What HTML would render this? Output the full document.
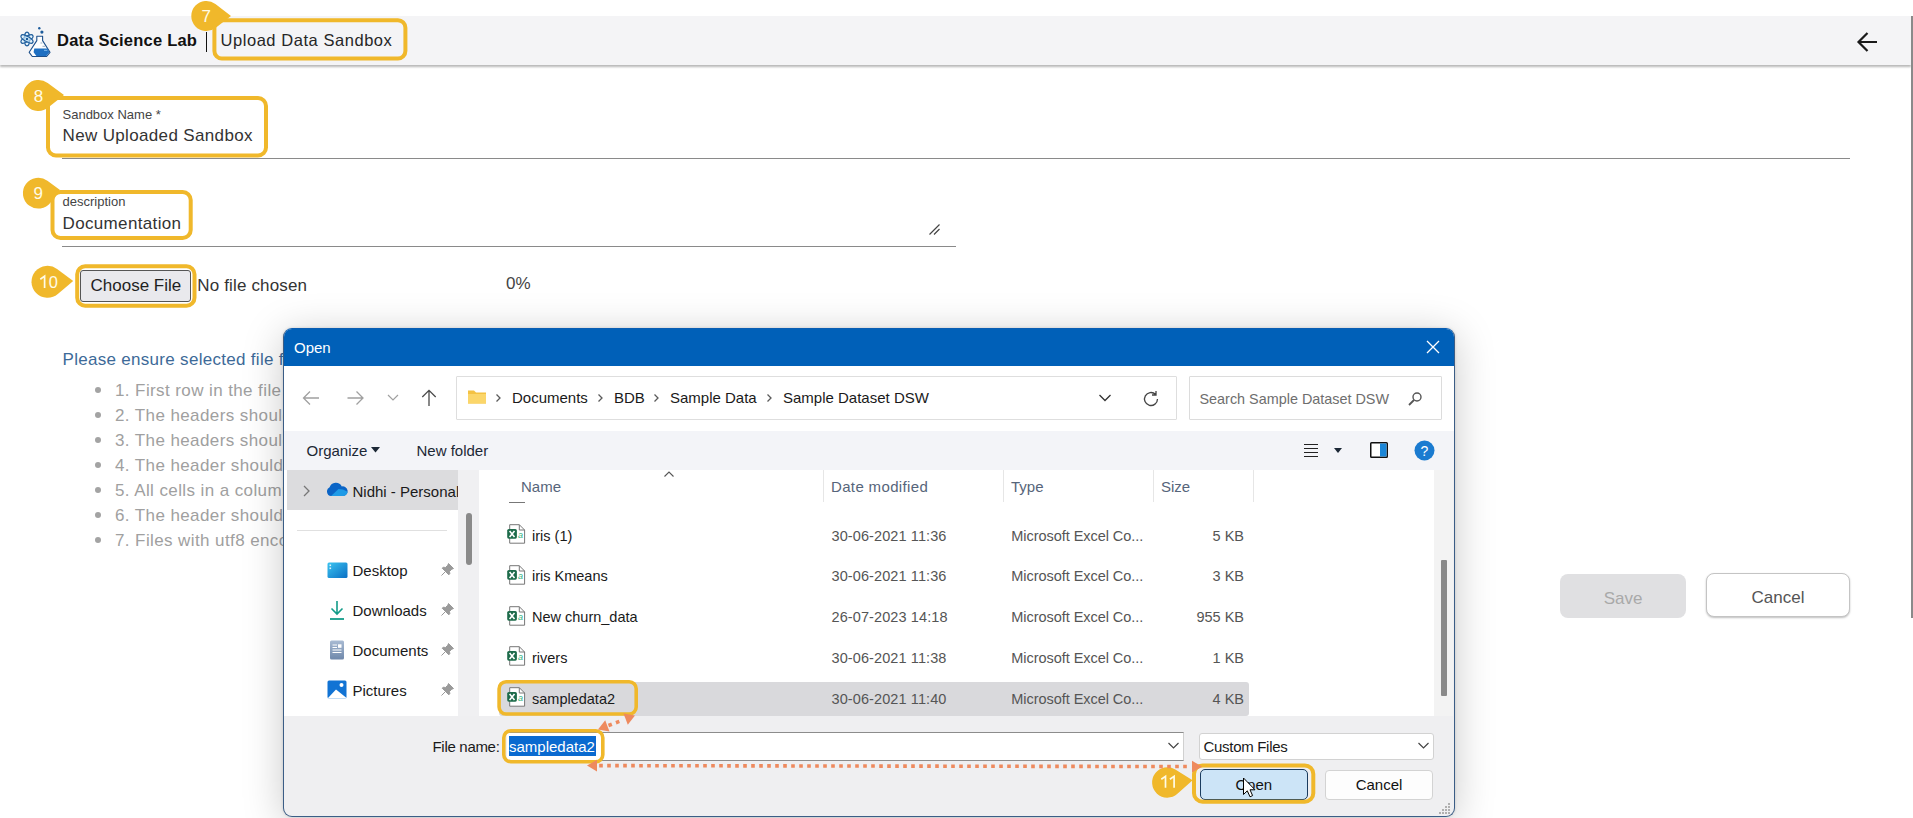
<!DOCTYPE html>
<html><head><meta charset="utf-8">
<style>
*{box-sizing:border-box;margin:0;padding:0}
html,body{width:1913px;height:818px;overflow:hidden;background:#fff}
body{position:relative;font-family:"Liberation Sans",sans-serif}
.a{position:absolute}
.t{position:absolute;white-space:nowrap;line-height:1}
</style></head><body>
<!-- header -->
<div class="a" style="left:0;top:16px;width:1911px;height:49px;background:#f4f4f6;box-shadow:0 1.5px 2px rgba(0,0,0,.28)"></div>
<div class="a" style="left:1911px;top:16px;width:2px;height:602px;background:#8a8a8a"></div>
<!-- logo -->
<svg class="a" style="left:0;top:0" width="60" height="64" viewBox="0 0 60 64">
 <g fill="#d9f1ff" fill-opacity=".6" stroke="#1d5c9c" stroke-width="1.2">
  <ellipse cx="27" cy="39" rx="2.6" ry="6.8"/>
  <ellipse cx="27" cy="39" rx="2.6" ry="6.8" transform="rotate(60 27 39)"/>
  <ellipse cx="27" cy="39" rx="2.6" ry="6.8" transform="rotate(-60 27 39)"/>
 </g>
 <circle cx="27" cy="39" r="1.3" fill="#1d5c9c"/>
 <circle cx="39.3" cy="28.2" r="1.2" fill="#1d5c9c"/><circle cx="41.9" cy="32.1" r="1.6" fill="#1d5c9c"/>
 <path d="M36.8 36.3 H42.6 V40.6 L50 52.3 L46.6 56.5 H32.3 L29.2 52.3 L36.8 40.6 Z" fill="#fff" fill-opacity=".85" stroke="#1d4f8a" stroke-width="1.1" stroke-linejoin="round"/>
 <path d="M34.3 48.4 H47.5 L49.4 52.3 L46.3 56.1 H36.4 L33.6 52.3 Z" fill="#1e6fc2"/>
 <path d="M44 50.3 H47.3" stroke="#8fc6f2" stroke-width="0.9"/>
 <path d="M40.5 43 H42.3 M42.5 46.3 H45" stroke="#6f8aa8" stroke-width="0.7"/>
</svg>
<div class="t" style="left:57px;top:31.5px;font-size:16.5px;font-weight:bold;color:#111;letter-spacing:0.22px">Data Science Lab</div>
<div class="a" style="left:205.5px;top:32px;width:1.2px;height:19.5px;background:#111"></div>
<div class="t" style="left:220.5px;top:31.5px;font-size:16.5px;color:#262626;letter-spacing:0.55px">Upload Data Sandbox</div>
<!-- back arrow -->
<svg class="a" style="left:1855px;top:31px" width="24" height="22" viewBox="0 0 24 22"><path d="M22 11 H3.5 M12.5 2 L3.5 11 L12.5 20" fill="none" stroke="#1a1a1a" stroke-width="2.2"/></svg>

<!-- form -->
<div class="t" style="left:62.5px;top:107.8px;font-size:13px;color:#444">Sandbox Name *</div>
<div class="t" style="left:62.5px;top:126.6px;font-size:17px;color:#333;letter-spacing:0.35px">New Uploaded Sandbox</div>
<div class="a" style="left:62px;top:158px;width:1788px;height:1px;background:#8a8a8a"></div>
<div class="t" style="left:62.5px;top:195px;font-size:13px;color:#444">description</div>
<div class="t" style="left:62.5px;top:214.6px;font-size:17px;color:#333;letter-spacing:0.35px">Documentation</div>
<svg class="a" style="left:928px;top:223px" width="13" height="13"><path d="M1.5 11.5 L11.5 1.5 M6 11.5 L11.5 6" stroke="#444" stroke-width="1.2"/></svg>
<div class="a" style="left:62px;top:246px;width:894px;height:1px;background:#8a8a8a"></div>
<div class="a" style="left:80px;top:270px;width:111px;height:32px;background:#e9e9ed;border:1px solid #555;border-radius:3px"></div>
<div class="t" style="left:90.5px;top:277.1px;font-size:17px;color:#1f1f1f">Choose File</div>
<div class="t" style="left:197.3px;top:277.1px;font-size:17px;color:#333;letter-spacing:0.15px">No file chosen</div>
<div class="t" style="left:506px;top:274.5px;font-size:17px;color:#444">0%</div>
<div class="t" style="left:62.5px;top:350.6px;font-size:17px;color:#3d6a98;letter-spacing:0.3px">Please ensure selected file format</div>
<div class="a" style="left:115px;top:377.6px;font-size:17px;color:#a0a0a0;line-height:25px;letter-spacing:0.4px;white-space:nowrap">
 <div>1. First row in the file</div><div>2. The headers should</div><div>3. The headers should</div><div>4. The header should</div><div>5. All cells in a column</div><div>6. The header should</div><div>7. Files with utf8 encoding</div>
</div>
<div class="a" style="left:95px;top:387px">
 <div class="a" style="top:0;width:6px;height:6px;border-radius:50%;background:#a3a3a3"></div>
 <div class="a" style="top:25px;width:6px;height:6px;border-radius:50%;background:#a3a3a3"></div>
 <div class="a" style="top:50px;width:6px;height:6px;border-radius:50%;background:#a3a3a3"></div>
 <div class="a" style="top:75px;width:6px;height:6px;border-radius:50%;background:#a3a3a3"></div>
 <div class="a" style="top:100px;width:6px;height:6px;border-radius:50%;background:#a3a3a3"></div>
 <div class="a" style="top:125px;width:6px;height:6px;border-radius:50%;background:#a3a3a3"></div>
 <div class="a" style="top:150px;width:6px;height:6px;border-radius:50%;background:#a3a3a3"></div>
</div>
<div class="a" style="left:1560px;top:574px;width:126px;height:44px;background:#e0e0e2;border-radius:8px"></div>
<div class="t" style="left:1560px;width:126px;text-align:center;top:590.2px;font-size:17px;color:#a9a9a9">Save</div>
<div class="a" style="left:1706px;top:573px;width:144px;height:44px;background:#fff;border:1px solid #c4c4c4;border-radius:8px;box-shadow:0 1px 2px rgba(0,0,0,.25)"></div>
<div class="t" style="left:1706px;width:144px;text-align:center;top:589.2px;font-size:17px;color:#555">Cancel</div>


<div class="a" style="left:283px;top:328px;width:1172px;height:489px;border-radius:9px;box-shadow:0 6px 40px rgba(0,0,0,.21),0 0 3px rgba(0,0,0,.15);background:#efeff1;border:1px solid #3b5d86;border-top-color:#0a5db2;overflow:hidden">
 <div class="a" style="left:0;top:0;width:1172px;height:38px;background:#0060b8"></div>
</div>
<div class="t" style="left:294px;top:340.3px;font-size:15px;color:#fff">Open</div>
<svg class="a" style="left:1426px;top:340px" width="14" height="14"><path d="M1 1 L13 13 M13 1 L1 13" stroke="#fff" stroke-width="1.3"/></svg>
<!-- toolbar area white -->
<div class="a" style="left:284px;top:366px;width:1170px;height:64.5px;background:#fff"></div>
<svg class="a" style="left:300px;top:388px" width="22" height="20"><path d="M19 10 H3.5 M10 3.5 L3.5 10 L10 16.5" fill="none" stroke="#a0a0a0" stroke-width="1.3"/></svg>
<svg class="a" style="left:345px;top:388px" width="22" height="20"><path d="M2.5 10 H18 M11.5 3.5 L18 10 L11.5 16.5" fill="none" stroke="#a0a0a0" stroke-width="1.3"/></svg>
<svg class="a" style="left:386px;top:393px" width="14" height="10"><path d="M2 2 L7 7 L12 2" fill="none" stroke="#a0a0a0" stroke-width="1.2"/></svg>
<svg class="a" style="left:419px;top:387px" width="20" height="22"><path d="M10 19 V3.5 M3.3 10 L10 3.3 L16.7 10" fill="none" stroke="#4a4a4a" stroke-width="1.3"/></svg>
<div class="a" style="left:456px;top:376px;width:721px;height:44px;background:#fff;border:1px solid #dedede;border-radius:1px"></div>
<svg class="a" style="left:467px;top:389px" width="20" height="16"><path d="M1 1.5 h6 l2 2 h10 v11 h-18z" fill="#f4c243"/><path d="M1 5 h18 v9.5 h-18z" fill="#fbd66a"/></svg>
<svg class="a" style="left:494px;top:392px" width="8" height="12"><path d="M2.5 2.5 L6 6 L2.5 9.5" fill="none" stroke="#5a5a5a" stroke-width="1.3"/></svg>
<div class="t" style="left:512px;top:390.3px;font-size:15px;color:#1a1a1a">Documents</div>
<svg class="a" style="left:596px;top:392px" width="8" height="12"><path d="M2.5 2.5 L6 6 L2.5 9.5" fill="none" stroke="#5a5a5a" stroke-width="1.3"/></svg>
<div class="t" style="left:614px;top:390.3px;font-size:15px;color:#1a1a1a">BDB</div>
<svg class="a" style="left:652px;top:392px" width="8" height="12"><path d="M2.5 2.5 L6 6 L2.5 9.5" fill="none" stroke="#5a5a5a" stroke-width="1.3"/></svg>
<div class="t" style="left:670px;top:390.3px;font-size:15px;color:#1a1a1a">Sample Data</div>
<svg class="a" style="left:765px;top:392px" width="8" height="12"><path d="M2.5 2.5 L6 6 L2.5 9.5" fill="none" stroke="#5a5a5a" stroke-width="1.3"/></svg>
<div class="t" style="left:783px;top:390.3px;font-size:15px;color:#1a1a1a">Sample Dataset DSW</div>
<svg class="a" style="left:1098px;top:393px" width="14" height="10"><path d="M1.5 2 L7 7.5 L12.5 2" fill="none" stroke="#333" stroke-width="1.3"/></svg>
<svg class="a" style="left:1142px;top:390px" width="19" height="18"><path d="M15.5 9 A6.5 6.5 0 1 1 13.5 4.3 M14 1 V5 H10" fill="none" stroke="#444" stroke-width="1.3"/></svg>
<div class="a" style="left:1189px;top:376px;width:253px;height:44px;background:#fff;border:1px solid #dcdcdc;border-radius:1px"></div>
<div class="t" style="left:1199.5px;top:392.3px;font-size:14.4px;color:#6e6e6e">Search Sample Dataset DSW</div>
<svg class="a" style="left:1407px;top:391px" width="16" height="16"><circle cx="10" cy="6" r="4" fill="none" stroke="#555" stroke-width="1.4"/><path d="M7 9 L2 14" stroke="#555" stroke-width="1.8"/></svg>
<!-- command bar -->
<div class="a" style="left:284px;top:430.5px;width:1170px;height:39.5px;background:#f3f4f8"></div>
<div class="t" style="left:306.5px;top:443.3px;font-size:15px;color:#1c2836">Organize</div>
<svg class="a" style="left:371px;top:447px" width="9" height="6"><path d="M0 0 H9 L4.5 5.5z" fill="#1c2836"/></svg>
<div class="t" style="left:416.5px;top:443.3px;font-size:15px;color:#1c2836">New folder</div>
<svg class="a" style="left:1303px;top:443px" width="16" height="16"><path d="M1 1.5 H15 M1 5.5 H15 M1 9.5 H15 M1 13.5 H15" stroke="#222" stroke-width="1.2"/></svg>
<svg class="a" style="left:1333.5px;top:448px" width="9" height="6"><path d="M0 0 H8 L4 5z" fill="#1c2836"/></svg>
<svg class="a" style="left:1370px;top:442px" width="20" height="18"><rect x="0.75" y="0.75" width="16.5" height="14.5" rx="0.8" fill="#fff" stroke="#111" stroke-width="1.5"/><rect x="10" y="1.5" width="6.5" height="13" fill="#1a86d8"/></svg>
<svg class="a" style="left:1414px;top:440px" width="21" height="21"><circle cx="10.5" cy="10.5" r="10" fill="#1a7bd0"/><text x="10.5" y="15.5" font-family="Liberation Sans" font-size="14" fill="#fff" text-anchor="middle">?</text></svg>
<!-- nav pane -->
<div class="a" style="left:284px;top:470px;width:174px;height:246px;background:#fff"></div>
<div class="a" style="left:458px;top:470px;width:21px;height:246px;background:#f0f0f2"></div>
<div class="a" style="left:466px;top:513px;width:6px;height:52px;background:#8a8a8a;border-radius:3px"></div>
<div class="a" style="left:287px;top:470px;width:171px;height:40px;background:#dcdcde"></div>
<svg class="a" style="left:301px;top:484px" width="10" height="14"><path d="M3 2 L8 7 L3 12" fill="none" stroke="#777" stroke-width="1.3"/></svg>
<svg class="a" style="left:326px;top:482px" width="22" height="15" viewBox="0 0 22 15"><defs><clipPath id="cc"><path d="M5 14 A4.6 4.6 0 0 1 3.6 5.3 A6.6 6.6 0 0 1 15.8 4.4 A4.6 4.6 0 0 1 17.6 14z"/></clipPath></defs><g clip-path="url(#cc)"><rect x="0" y="0" width="22" height="15" fill="#0a64c6"/><path d="M4 15 L12.5 7 L17 7.5 L22 10 V15z" fill="#1e9ae6"/></g></svg>
<div class="t" style="left:352.5px;top:483.6px;width:105px;overflow:hidden;font-size:15px;color:#1a1a1a">Nidhi - Personal</div>
<div class="a" style="left:297px;top:530px;width:150px;height:1px;background:#e0e0e0"></div>

<!-- quick access -->
<svg class="a" style="left:327px;top:562px" width="21" height="17"><defs><linearGradient id="dg" x1="0" y1="0" x2="1" y2="1"><stop offset="0" stop-color="#3cc4f0"/><stop offset="1" stop-color="#0a6fc4"/></linearGradient></defs><rect x="0.5" y="0.5" width="20" height="15.5" rx="1.5" fill="url(#dg)"/><rect x="2.5" y="2.5" width="1.6" height="1.6" fill="#fff" fill-opacity=".85"/><rect x="2.5" y="5.5" width="1.6" height="1.6" fill="#fff" fill-opacity=".85"/></svg>
<div class="t" style="left:352.5px;top:563.3px;font-size:15px;color:#1a1a1a">Desktop</div>
<svg class="a" style="left:329px;top:600px" width="16" height="21"><path d="M8 1 V14 M2.5 8.5 L8 14 L13.5 8.5" fill="none" stroke="#139c89" stroke-width="1.6"/><path d="M1 19 H15" stroke="#139c89" stroke-width="1.8"/></svg>
<div class="t" style="left:352.5px;top:603.3px;font-size:15px;color:#1a1a1a">Downloads</div>
<svg class="a" style="left:329px;top:640px" width="16" height="20"><defs><linearGradient id="docg" x1="0" y1="0" x2="0" y2="1"><stop offset="0" stop-color="#a9bbd3"/><stop offset="1" stop-color="#6f88ab"/></linearGradient></defs><rect x="1" y="0.5" width="14" height="19" rx="1.5" fill="url(#docg)"/><path d="M3.5 5 H8 M3.5 7.5 H8 M3.5 10 H12.5 M3.5 12.5 H12.5" stroke="#fff" stroke-width="1"/><rect x="9" y="4.3" width="3.5" height="3.5" fill="#fff"/></svg>
<div class="t" style="left:352.5px;top:643.3px;font-size:15px;color:#1a1a1a">Documents</div>
<svg class="a" style="left:327px;top:680px" width="20" height="19"><rect x="0.5" y="0.5" width="19" height="18" rx="1.5" fill="#1173d4"/><path d="M1 18 L9 9.5 L19 17.5 V18.5 H1z" fill="#fff"/><circle cx="14.5" cy="5" r="2" fill="#fff"/></svg>
<div class="t" style="left:352.5px;top:683.3px;font-size:15px;color:#1a1a1a">Pictures</div>
<svg class="a" style="left:440px;top:562px" width="15" height="15"><path d="M8.5 1.5 L13.5 6.5 L11.8 7.2 L9.5 9.5 L9.8 11.8 L8.8 12.8 L2.2 6.2 L3.2 5.2 L5.5 5.5 L7.8 3.2z M5.5 9.5 L1.5 13.5" fill="#9a9a9a" stroke="#9a9a9a" stroke-width="1" stroke-linejoin="round"/></svg>
<svg class="a" style="left:440px;top:602px" width="15" height="15"><path d="M8.5 1.5 L13.5 6.5 L11.8 7.2 L9.5 9.5 L9.8 11.8 L8.8 12.8 L2.2 6.2 L3.2 5.2 L5.5 5.5 L7.8 3.2z M5.5 9.5 L1.5 13.5" fill="#9a9a9a" stroke="#9a9a9a" stroke-width="1" stroke-linejoin="round"/></svg>
<svg class="a" style="left:440px;top:642px" width="15" height="15"><path d="M8.5 1.5 L13.5 6.5 L11.8 7.2 L9.5 9.5 L9.8 11.8 L8.8 12.8 L2.2 6.2 L3.2 5.2 L5.5 5.5 L7.8 3.2z M5.5 9.5 L1.5 13.5" fill="#9a9a9a" stroke="#9a9a9a" stroke-width="1" stroke-linejoin="round"/></svg>
<svg class="a" style="left:440px;top:682px" width="15" height="15"><path d="M8.5 1.5 L13.5 6.5 L11.8 7.2 L9.5 9.5 L9.8 11.8 L8.8 12.8 L2.2 6.2 L3.2 5.2 L5.5 5.5 L7.8 3.2z M5.5 9.5 L1.5 13.5" fill="#9a9a9a" stroke="#9a9a9a" stroke-width="1" stroke-linejoin="round"/></svg>

<!-- file list -->
<div class="a" style="left:479px;top:470px;width:955px;height:246px;background:#fff"></div>
<div class="a" style="left:1434px;top:470px;width:19px;height:246px;background:#f3f3f3"></div>
<div class="a" style="left:1441px;top:560px;width:6px;height:136px;background:#8a8a8a;border-radius:1px"></div>
<svg class="a" style="left:663px;top:470px" width="12" height="8"><path d="M1.5 6.5 L6 2 L10.5 6.5" fill="none" stroke="#555" stroke-width="1.1"/></svg>
<div class="t" style="left:521px;top:478.8px;font-size:15px;color:#56657a">Name</div>
<div class="a" style="left:509px;top:502px;width:16px;height:1px;background:#777"></div>
<div class="a" style="left:823px;top:470px;width:1px;height:32px;background:#e6e6e6"></div>
<div class="t" style="left:831px;top:478.8px;font-size:15px;color:#56657a;letter-spacing:0.35px">Date modified</div>
<div class="a" style="left:1003px;top:470px;width:1px;height:32px;background:#e6e6e6"></div>
<div class="t" style="left:1011px;top:478.8px;font-size:15px;color:#56657a">Type</div>
<div class="a" style="left:1153px;top:470px;width:1px;height:32px;background:#e6e6e6"></div>
<div class="t" style="left:1161px;top:478.8px;font-size:15px;color:#56657a">Size</div>
<div class="a" style="left:1253px;top:470px;width:1px;height:32px;background:#e6e6e6"></div>
<div class="a" style="left:499px;top:681.5px;width:750px;height:34px;background:#d9d9dc;border-radius:3px"></div>
<svg class="a" style="left:506px;top:524px" width="20" height="22" viewBox="0 0 20 22"><path d="M3.7 0.7 H13.3 L18.6 6 V19.2 H3.7 Z" fill="#fff" stroke="#777" stroke-width="1" stroke-linejoin="round"/><path d="M13.3 0.7 V6 H18.6" fill="none" stroke="#777" stroke-width="1"/><rect x="1.2" y="5" width="9.7" height="9.7" rx="1.6" fill="#1d6b4a"/><path d="M3.6 7 L8.5 12.9 M8.5 7 L3.6 12.9" stroke="#fff" stroke-width="1.6"/><text x="14.6" y="14" font-family="Liberation Sans" font-size="9" font-style="italic" fill="#2bb07f" text-anchor="middle">a</text></svg>
<div class="t" style="left:532px;top:528.5px;font-size:14.5px;color:#1a1a1a">iris (1)</div>
<div class="t" style="left:831.5px;top:528.5px;font-size:14.5px;color:#555;letter-spacing:0.1px">30-06-2021 11:36</div>
<div class="t" style="left:1011.3px;top:528.5px;font-size:14.5px;color:#555;letter-spacing:-0.05px">Microsoft Excel Co...</div>
<div class="t" style="left:1144px;width:100px;text-align:right;top:528.5px;font-size:14.5px;color:#555">5 KB</div>
<svg class="a" style="left:506px;top:565px" width="20" height="22" viewBox="0 0 20 22"><path d="M3.7 0.7 H13.3 L18.6 6 V19.2 H3.7 Z" fill="#fff" stroke="#777" stroke-width="1" stroke-linejoin="round"/><path d="M13.3 0.7 V6 H18.6" fill="none" stroke="#777" stroke-width="1"/><rect x="1.2" y="5" width="9.7" height="9.7" rx="1.6" fill="#1d6b4a"/><path d="M3.6 7 L8.5 12.9 M8.5 7 L3.6 12.9" stroke="#fff" stroke-width="1.6"/><text x="14.6" y="14" font-family="Liberation Sans" font-size="9" font-style="italic" fill="#2bb07f" text-anchor="middle">a</text></svg>
<div class="t" style="left:532px;top:569.4px;font-size:14.5px;color:#1a1a1a">iris Kmeans</div>
<div class="t" style="left:831.5px;top:569.4px;font-size:14.5px;color:#555;letter-spacing:0.1px">30-06-2021 11:36</div>
<div class="t" style="left:1011.3px;top:569.4px;font-size:14.5px;color:#555;letter-spacing:-0.05px">Microsoft Excel Co...</div>
<div class="t" style="left:1144px;width:100px;text-align:right;top:569.4px;font-size:14.5px;color:#555">3 KB</div>
<svg class="a" style="left:506px;top:606px" width="20" height="22" viewBox="0 0 20 22"><path d="M3.7 0.7 H13.3 L18.6 6 V19.2 H3.7 Z" fill="#fff" stroke="#777" stroke-width="1" stroke-linejoin="round"/><path d="M13.3 0.7 V6 H18.6" fill="none" stroke="#777" stroke-width="1"/><rect x="1.2" y="5" width="9.7" height="9.7" rx="1.6" fill="#1d6b4a"/><path d="M3.6 7 L8.5 12.9 M8.5 7 L3.6 12.9" stroke="#fff" stroke-width="1.6"/><text x="14.6" y="14" font-family="Liberation Sans" font-size="9" font-style="italic" fill="#2bb07f" text-anchor="middle">a</text></svg>
<div class="t" style="left:532px;top:610.3px;font-size:14.5px;color:#1a1a1a">New churn_data</div>
<div class="t" style="left:831.5px;top:610.3px;font-size:14.5px;color:#555;letter-spacing:0.1px">26-07-2023 14:18</div>
<div class="t" style="left:1011.3px;top:610.3px;font-size:14.5px;color:#555;letter-spacing:-0.05px">Microsoft Excel Co...</div>
<div class="t" style="left:1144px;width:100px;text-align:right;top:610.3px;font-size:14.5px;color:#555">955 KB</div>
<svg class="a" style="left:506px;top:646px" width="20" height="22" viewBox="0 0 20 22"><path d="M3.7 0.7 H13.3 L18.6 6 V19.2 H3.7 Z" fill="#fff" stroke="#777" stroke-width="1" stroke-linejoin="round"/><path d="M13.3 0.7 V6 H18.6" fill="none" stroke="#777" stroke-width="1"/><rect x="1.2" y="5" width="9.7" height="9.7" rx="1.6" fill="#1d6b4a"/><path d="M3.6 7 L8.5 12.9 M8.5 7 L3.6 12.9" stroke="#fff" stroke-width="1.6"/><text x="14.6" y="14" font-family="Liberation Sans" font-size="9" font-style="italic" fill="#2bb07f" text-anchor="middle">a</text></svg>
<div class="t" style="left:532px;top:651.2px;font-size:14.5px;color:#1a1a1a">rivers</div>
<div class="t" style="left:831.5px;top:651.2px;font-size:14.5px;color:#555;letter-spacing:0.1px">30-06-2021 11:38</div>
<div class="t" style="left:1011.3px;top:651.2px;font-size:14.5px;color:#555;letter-spacing:-0.05px">Microsoft Excel Co...</div>
<div class="t" style="left:1144px;width:100px;text-align:right;top:651.2px;font-size:14.5px;color:#555">1 KB</div>
<svg class="a" style="left:506px;top:687px" width="20" height="22" viewBox="0 0 20 22"><path d="M3.7 0.7 H13.3 L18.6 6 V19.2 H3.7 Z" fill="#fff" stroke="#777" stroke-width="1" stroke-linejoin="round"/><path d="M13.3 0.7 V6 H18.6" fill="none" stroke="#777" stroke-width="1"/><rect x="1.2" y="5" width="9.7" height="9.7" rx="1.6" fill="#1d6b4a"/><path d="M3.6 7 L8.5 12.9 M8.5 7 L3.6 12.9" stroke="#fff" stroke-width="1.6"/><text x="14.6" y="14" font-family="Liberation Sans" font-size="9" font-style="italic" fill="#2bb07f" text-anchor="middle">a</text></svg>
<div class="t" style="left:532px;top:692.1px;font-size:14.5px;color:#1a1a1a">sampledata2</div>
<div class="t" style="left:831.5px;top:692.1px;font-size:14.5px;color:#555;letter-spacing:0.1px">30-06-2021 11:40</div>
<div class="t" style="left:1011.3px;top:692.1px;font-size:14.5px;color:#555;letter-spacing:-0.05px">Microsoft Excel Co...</div>
<div class="t" style="left:1144px;width:100px;text-align:right;top:692.1px;font-size:14.5px;color:#555">4 KB</div>

<!-- footer -->
<div class="t" style="left:432.5px;top:738.9px;font-size:15px;color:#1a1a1a;letter-spacing:-0.3px">File name:</div>
<div class="a" style="left:507px;top:732px;width:677px;height:29px;background:#fff;border:1px solid #8c8c8c;border-left:none;border-right-color:#d0d0d0"></div>
<div class="a" style="left:509px;top:736px;width:87px;height:20px;background:#0a6ad0"></div>
<div class="t" style="left:509px;top:738.5px;font-size:15px;color:#fff">sampledata2</div>
<svg class="a" style="left:1167px;top:741px" width="13" height="9"><path d="M1.5 2 L6.5 7 L11.5 2" fill="none" stroke="#444" stroke-width="1.2"/></svg>
<div class="a" style="left:1199px;top:733px;width:235px;height:27px;background:#fff;border:1px solid #d2d2d2;border-radius:3px"></div>
<div class="t" style="left:1203.5px;top:738.9px;font-size:15px;color:#1a1a1a;letter-spacing:-0.3px">Custom Files</div>
<svg class="a" style="left:1417px;top:741px" width="13" height="9"><path d="M1.5 2 L6.5 7 L11.5 2" fill="none" stroke="#444" stroke-width="1.2"/></svg>
<div class="a" style="left:1199.5px;top:769px;width:108.5px;height:31px;background:#cce4f7;border:1.5px solid #1b3c5f;border-radius:5px"></div>
<div class="t" style="left:1199.5px;width:108.5px;text-align:center;top:777.1px;font-size:15px;color:#111">Open</div>
<div class="a" style="left:1325px;top:769.5px;width:108px;height:30.5px;background:#fdfdfd;border:1px solid #d3d3d3;border-radius:4px"></div>
<div class="t" style="left:1325px;width:108px;text-align:center;top:777.1px;font-size:15px;color:#111">Cancel</div>
<svg class="a" style="left:1439px;top:802px" width="13" height="13"><g fill="#b0b0b0"><rect x="9" y="1" width="2" height="2"/><rect x="6" y="4" width="2" height="2"/><rect x="9" y="4" width="2" height="2"/><rect x="3" y="7" width="2" height="2"/><rect x="6" y="7" width="2" height="2"/><rect x="9" y="7" width="2" height="2"/><rect x="0" y="10" width="2" height="2"/><rect x="3" y="10" width="2" height="2"/><rect x="6" y="10" width="2" height="2"/><rect x="9" y="10" width="2" height="2"/></g></svg>
<!--DIALOG-->

<svg class="a" style="left:0;top:0" width="1913" height="818" viewBox="0 0 1913 818"><path d="M215.41 4.08 L231 16 L215.41 27.92 A15 15 0 1 1 215.41 4.08Z" fill="#f0b82b"/><text x="206.3" y="22.1" font-family="Liberation Sans" font-size="17" fill="#fffbe6" text-anchor="middle">7</text><rect x="214.4" y="20.2" width="190.99999999999997" height="38.3" rx="7.5" fill="none" stroke="#f0b82b" stroke-width="4"/><path d="M47.68 83.01 L64 95 L48.16 107.62 A15.5 15.5 0 1 1 47.68 83.01Z" fill="#f0b82b"/><text x="38.5" y="101.6" font-family="Liberation Sans" font-size="17" fill="#fffbe6" text-anchor="middle">8</text><rect x="48.0" y="98.0" width="218" height="57.5" rx="8" fill="none" stroke="#f0b82b" stroke-width="4"/><path d="M47.40 180.77 L60 190 L50.60 202.47 A15.4 15.4 0 1 1 47.40 180.77Z" fill="#f0b82b"/><text x="38.3" y="199.3" font-family="Liberation Sans" font-size="17" fill="#fffbe6" text-anchor="middle">9</text><rect x="52.5" y="192.0" width="138.2" height="46" rx="8" fill="none" stroke="#f0b82b" stroke-width="4"/><path d="M57.06 268.97 L73.2 281 L57.84 294.01 A16 16 0 1 1 57.06 268.97Z" fill="#f0b82b"/><path d="M40.3 279.2 L44.6 276.1 V288" fill="none" stroke="#fffbe6" stroke-width="1.7" stroke-linejoin="miter"/><text x="53.3" y="288" font-family="Liberation Sans" font-size="16.5" fill="#fffbe6" text-anchor="middle">0</text><rect x="77.2" y="266.2" width="117.3" height="39.5" rx="8" fill="none" stroke="#f0b82b" stroke-width="4"/><rect x="499.1" y="681.8" width="137.1" height="32.19999999999995" rx="7" fill="none" stroke="#f0b82b" stroke-width="3.6"/><rect x="503.8" y="730.8" width="99.00000000000003" height="30.9" rx="7" fill="none" stroke="#f0b82b" stroke-width="3.6"/><rect x="1194.0" y="765.4" width="119.29999999999995" height="36.30000000000007" rx="8.5" fill="none" stroke="#f0b82b" stroke-width="4"/><path d="M1175.31 769.58 L1192.6 780.3 L1177.42 793.84 A15.2 15.2 0 1 1 1175.31 769.58Z" fill="#f0b82b"/><path d="M1161.3 779.2 L1165.5 776.3 V787.8 M1169.9 779.2 L1174.1 776.3 V787.8" fill="none" stroke="#fffbe6" stroke-width="1.7"/><rect x="608.36" y="723.10" width="3.6" height="3.6" fill="#ee8a5e" transform="rotate(-20.7 610.16 724.90)"/><rect x="615.84" y="720.27" width="3.6" height="3.6" fill="#ee8a5e" transform="rotate(-20.7 617.64 722.07)"/><path d="M598.00 729.50 L609.48 731.57 L605.23 720.35Z" fill="#ee8a5e"/><path d="M635.00 715.50 L627.77 724.65 L623.52 713.43Z" fill="#ee8a5e"/><rect x="599.20" y="763.82" width="3.6" height="3.6" fill="#ee8a5e" transform="rotate(0.1 601.00 765.62)"/><rect x="607.20" y="763.84" width="3.6" height="3.6" fill="#ee8a5e" transform="rotate(0.1 609.00 765.64)"/><rect x="615.20" y="763.85" width="3.6" height="3.6" fill="#ee8a5e" transform="rotate(0.1 617.00 765.65)"/><rect x="623.20" y="763.86" width="3.6" height="3.6" fill="#ee8a5e" transform="rotate(0.1 625.00 765.66)"/><rect x="631.20" y="763.87" width="3.6" height="3.6" fill="#ee8a5e" transform="rotate(0.1 633.00 765.67)"/><rect x="639.20" y="763.89" width="3.6" height="3.6" fill="#ee8a5e" transform="rotate(0.1 641.00 765.69)"/><rect x="647.20" y="763.90" width="3.6" height="3.6" fill="#ee8a5e" transform="rotate(0.1 649.00 765.70)"/><rect x="655.20" y="763.91" width="3.6" height="3.6" fill="#ee8a5e" transform="rotate(0.1 657.00 765.71)"/><rect x="663.20" y="763.93" width="3.6" height="3.6" fill="#ee8a5e" transform="rotate(0.1 665.00 765.73)"/><rect x="671.20" y="763.94" width="3.6" height="3.6" fill="#ee8a5e" transform="rotate(0.1 673.00 765.74)"/><rect x="679.20" y="763.95" width="3.6" height="3.6" fill="#ee8a5e" transform="rotate(0.1 681.00 765.75)"/><rect x="687.20" y="763.97" width="3.6" height="3.6" fill="#ee8a5e" transform="rotate(0.1 689.00 765.77)"/><rect x="695.20" y="763.98" width="3.6" height="3.6" fill="#ee8a5e" transform="rotate(0.1 697.00 765.78)"/><rect x="703.20" y="763.99" width="3.6" height="3.6" fill="#ee8a5e" transform="rotate(0.1 705.00 765.79)"/><rect x="711.20" y="764.00" width="3.6" height="3.6" fill="#ee8a5e" transform="rotate(0.1 713.00 765.80)"/><rect x="719.20" y="764.02" width="3.6" height="3.6" fill="#ee8a5e" transform="rotate(0.1 721.00 765.82)"/><rect x="727.20" y="764.03" width="3.6" height="3.6" fill="#ee8a5e" transform="rotate(0.1 729.00 765.83)"/><rect x="735.20" y="764.04" width="3.6" height="3.6" fill="#ee8a5e" transform="rotate(0.1 737.00 765.84)"/><rect x="743.20" y="764.06" width="3.6" height="3.6" fill="#ee8a5e" transform="rotate(0.1 745.00 765.86)"/><rect x="751.20" y="764.07" width="3.6" height="3.6" fill="#ee8a5e" transform="rotate(0.1 753.00 765.87)"/><rect x="759.20" y="764.08" width="3.6" height="3.6" fill="#ee8a5e" transform="rotate(0.1 761.00 765.88)"/><rect x="767.20" y="764.10" width="3.6" height="3.6" fill="#ee8a5e" transform="rotate(0.1 769.00 765.90)"/><rect x="775.20" y="764.11" width="3.6" height="3.6" fill="#ee8a5e" transform="rotate(0.1 777.00 765.91)"/><rect x="783.20" y="764.12" width="3.6" height="3.6" fill="#ee8a5e" transform="rotate(0.1 785.00 765.92)"/><rect x="791.20" y="764.13" width="3.6" height="3.6" fill="#ee8a5e" transform="rotate(0.1 793.00 765.93)"/><rect x="799.20" y="764.15" width="3.6" height="3.6" fill="#ee8a5e" transform="rotate(0.1 801.00 765.95)"/><rect x="807.20" y="764.16" width="3.6" height="3.6" fill="#ee8a5e" transform="rotate(0.1 809.00 765.96)"/><rect x="815.20" y="764.17" width="3.6" height="3.6" fill="#ee8a5e" transform="rotate(0.1 817.00 765.97)"/><rect x="823.20" y="764.19" width="3.6" height="3.6" fill="#ee8a5e" transform="rotate(0.1 825.00 765.99)"/><rect x="831.20" y="764.20" width="3.6" height="3.6" fill="#ee8a5e" transform="rotate(0.1 833.00 766.00)"/><rect x="839.20" y="764.21" width="3.6" height="3.6" fill="#ee8a5e" transform="rotate(0.1 841.00 766.01)"/><rect x="847.20" y="764.23" width="3.6" height="3.6" fill="#ee8a5e" transform="rotate(0.1 849.00 766.03)"/><rect x="855.20" y="764.24" width="3.6" height="3.6" fill="#ee8a5e" transform="rotate(0.1 857.00 766.04)"/><rect x="863.20" y="764.25" width="3.6" height="3.6" fill="#ee8a5e" transform="rotate(0.1 865.00 766.05)"/><rect x="871.20" y="764.27" width="3.6" height="3.6" fill="#ee8a5e" transform="rotate(0.1 873.00 766.07)"/><rect x="879.20" y="764.28" width="3.6" height="3.6" fill="#ee8a5e" transform="rotate(0.1 881.00 766.08)"/><rect x="887.20" y="764.29" width="3.6" height="3.6" fill="#ee8a5e" transform="rotate(0.1 889.00 766.09)"/><rect x="895.20" y="764.30" width="3.6" height="3.6" fill="#ee8a5e" transform="rotate(0.1 897.00 766.10)"/><rect x="903.20" y="764.32" width="3.6" height="3.6" fill="#ee8a5e" transform="rotate(0.1 905.00 766.12)"/><rect x="911.20" y="764.33" width="3.6" height="3.6" fill="#ee8a5e" transform="rotate(0.1 913.00 766.13)"/><rect x="919.20" y="764.34" width="3.6" height="3.6" fill="#ee8a5e" transform="rotate(0.1 921.00 766.14)"/><rect x="927.20" y="764.36" width="3.6" height="3.6" fill="#ee8a5e" transform="rotate(0.1 929.00 766.16)"/><rect x="935.20" y="764.37" width="3.6" height="3.6" fill="#ee8a5e" transform="rotate(0.1 937.00 766.17)"/><rect x="943.20" y="764.38" width="3.6" height="3.6" fill="#ee8a5e" transform="rotate(0.1 945.00 766.18)"/><rect x="951.20" y="764.40" width="3.6" height="3.6" fill="#ee8a5e" transform="rotate(0.1 953.00 766.20)"/><rect x="959.20" y="764.41" width="3.6" height="3.6" fill="#ee8a5e" transform="rotate(0.1 961.00 766.21)"/><rect x="967.20" y="764.42" width="3.6" height="3.6" fill="#ee8a5e" transform="rotate(0.1 969.00 766.22)"/><rect x="975.20" y="764.43" width="3.6" height="3.6" fill="#ee8a5e" transform="rotate(0.1 977.00 766.23)"/><rect x="983.20" y="764.45" width="3.6" height="3.6" fill="#ee8a5e" transform="rotate(0.1 985.00 766.25)"/><rect x="991.20" y="764.46" width="3.6" height="3.6" fill="#ee8a5e" transform="rotate(0.1 993.00 766.26)"/><rect x="999.20" y="764.47" width="3.6" height="3.6" fill="#ee8a5e" transform="rotate(0.1 1001.00 766.27)"/><rect x="1007.20" y="764.49" width="3.6" height="3.6" fill="#ee8a5e" transform="rotate(0.1 1009.00 766.29)"/><rect x="1015.20" y="764.50" width="3.6" height="3.6" fill="#ee8a5e" transform="rotate(0.1 1017.00 766.30)"/><rect x="1023.20" y="764.51" width="3.6" height="3.6" fill="#ee8a5e" transform="rotate(0.1 1025.00 766.31)"/><rect x="1031.20" y="764.53" width="3.6" height="3.6" fill="#ee8a5e" transform="rotate(0.1 1033.00 766.33)"/><rect x="1039.20" y="764.54" width="3.6" height="3.6" fill="#ee8a5e" transform="rotate(0.1 1041.00 766.34)"/><rect x="1047.20" y="764.55" width="3.6" height="3.6" fill="#ee8a5e" transform="rotate(0.1 1049.00 766.35)"/><rect x="1055.20" y="764.56" width="3.6" height="3.6" fill="#ee8a5e" transform="rotate(0.1 1057.00 766.36)"/><rect x="1063.20" y="764.58" width="3.6" height="3.6" fill="#ee8a5e" transform="rotate(0.1 1065.00 766.38)"/><rect x="1071.20" y="764.59" width="3.6" height="3.6" fill="#ee8a5e" transform="rotate(0.1 1073.00 766.39)"/><rect x="1079.20" y="764.60" width="3.6" height="3.6" fill="#ee8a5e" transform="rotate(0.1 1081.00 766.40)"/><rect x="1087.20" y="764.62" width="3.6" height="3.6" fill="#ee8a5e" transform="rotate(0.1 1089.00 766.42)"/><rect x="1095.20" y="764.63" width="3.6" height="3.6" fill="#ee8a5e" transform="rotate(0.1 1097.00 766.43)"/><rect x="1103.20" y="764.64" width="3.6" height="3.6" fill="#ee8a5e" transform="rotate(0.1 1105.00 766.44)"/><rect x="1111.20" y="764.66" width="3.6" height="3.6" fill="#ee8a5e" transform="rotate(0.1 1113.00 766.46)"/><rect x="1119.20" y="764.67" width="3.6" height="3.6" fill="#ee8a5e" transform="rotate(0.1 1121.00 766.47)"/><rect x="1127.20" y="764.68" width="3.6" height="3.6" fill="#ee8a5e" transform="rotate(0.1 1129.00 766.48)"/><rect x="1135.20" y="764.69" width="3.6" height="3.6" fill="#ee8a5e" transform="rotate(0.1 1137.00 766.49)"/><rect x="1143.20" y="764.71" width="3.6" height="3.6" fill="#ee8a5e" transform="rotate(0.1 1145.00 766.51)"/><rect x="1151.20" y="764.72" width="3.6" height="3.6" fill="#ee8a5e" transform="rotate(0.1 1153.00 766.52)"/><rect x="1159.20" y="764.73" width="3.6" height="3.6" fill="#ee8a5e" transform="rotate(0.1 1161.00 766.53)"/><rect x="1167.20" y="764.75" width="3.6" height="3.6" fill="#ee8a5e" transform="rotate(0.1 1169.00 766.55)"/><rect x="1175.20" y="764.76" width="3.6" height="3.6" fill="#ee8a5e" transform="rotate(0.1 1177.00 766.56)"/><rect x="1183.20" y="764.77" width="3.6" height="3.6" fill="#ee8a5e" transform="rotate(0.1 1185.00 766.57)"/><path d="M587.00 765.60 L596.99 771.42 L597.01 759.82Z" fill="#ee8a5e"/><path d="M1202.00 766.60 L1191.99 772.38 L1192.01 760.78Z" fill="#ee8a5e"/><path d="M1243.5 778 L1243.5 794.5 L1247.3 790.8 L1250 796.8 L1252.6 795.6 L1250 789.8 L1255 789.8Z" fill="#fff" stroke="#000" stroke-width="1" stroke-linejoin="round"/></svg>
<!--ANNOT-->
</body></html>
